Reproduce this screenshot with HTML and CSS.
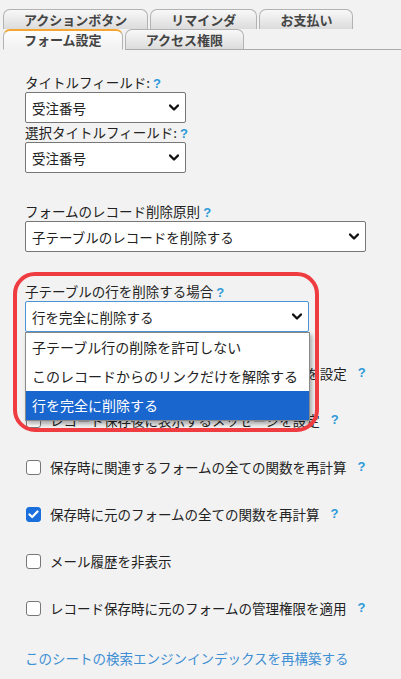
FILE: index.html
```html
<!DOCTYPE html>
<html lang="ja">
<head>
  <meta charset="UTF-8">
  <meta name="viewport" content="width=device-width, initial-scale=1.0">
  <title>フォーム設定</title>
  <link rel="stylesheet" href="styles.css">
</head>
<body>
  <div class="tabs">
    <div class="tab-row">
      <div class="tab">アクションボタン</div>
      <div class="tab">リマインダ</div>
      <div class="tab">お支払い</div>
    </div>
    <div class="tab-row front">
      <div class="tab active">フォーム設定</div>
      <div class="tab">アクセス権限</div>
      <div class="tab-fill"></div>
    </div>
  </div>

  <div class="panel">
    <div class="group">
      <div class="field">
        <div class="label">タイトルフィールド: <span class="help">?</span></div>
        <div class="select short">
          <span>受注番号</span>
          <svg class="chev" width="10" height="7" viewBox="0 0 10 7"><polyline points="1,1.5 5,5.5 9,1.5" /></svg>
        </div>
      </div>
      <div class="field">
        <div class="label">選択タイトルフィールド: <span class="help">?</span></div>
        <div class="select short">
          <span>受注番号</span>
          <svg class="chev" width="10" height="7" viewBox="0 0 10 7"><polyline points="1,1.5 5,5.5 9,1.5" /></svg>
        </div>
      </div>
    </div>

    <div class="group gap-top">
      <div class="label">フォームのレコード削除原則 <span class="help">?</span></div>
      <div class="select wide">
        <span>子テーブルのレコードを削除する</span>
        <svg class="chev" width="10" height="7" viewBox="0 0 10 7"><polyline points="1,1.5 5,5.5 9,1.5" /></svg>
      </div>
    </div>

    <div class="group gap-top marked">
      <div class="label">子テーブルの行を削除する場合 <span class="help">?</span></div>
      <div class="select-wrap">
        <div class="select mid focused">
          <span>行を完全に削除する</span>
          <svg class="chev" width="10" height="7" viewBox="0 0 10 7"><polyline points="1,1.5 5,5.5 9,1.5" /></svg>
        </div>
        <ul class="menu">
          <li>子テーブル行の削除を許可しない</li>
          <li>このレコードからのリンクだけを解除する</li>
          <li class="selected">行を完全に削除する</li>
        </ul>
      </div>
      <div class="highlight"></div>
    </div>

    <div class="checks">
      <div class="check"><span class="box"></span><span>レコード保存前に表示する確認メッセージを設定</span><span class="help">?</span></div>
      <div class="check"><span class="box"></span><span>レコード保存後に表示するメッセージを設定</span><span class="help">?</span></div>
      <div class="check"><span class="box"></span><span>保存時に関連するフォームの全ての関数を再計算</span><span class="help">?</span></div>
      <div class="check"><span class="box on"><svg width="11" height="9" viewBox="0 0 11 9"><polyline points="1.5,4.5 4.2,7 9.5,1.5" /></svg></span><span>保存時に元のフォームの全ての関数を再計算</span><span class="help">?</span></div>
      <div class="check"><span class="box"></span><span>メール履歴を非表示</span></div>
      <div class="check"><span class="box"></span><span>レコード保存時に元のフォームの管理権限を適用</span><span class="help">?</span></div>
    </div>

    <a class="rebuild" href="#">このシートの検索エンジンインデックスを再構築する</a>
  </div>
</body>
</html>
```

FILE: styles.css
```css
body {
  margin: 0;
  background: #f2f2f2;
  font-family: "Noto Sans CJK JP", "Noto Sans", sans-serif;
  font-size: 13.5px;
  color: #222;
}

/* tabs */
.tabs {
  padding: 9px 0 0 3px;
}
.tab-row {
  display: flex;
  gap: 2px;
  height: 20px;
}
.tab-row.front {
  height: 21px;
}
.tab {
  box-sizing: border-box;
  height: 20px;
  padding: 0 20px;
  border: 1px solid #b2b2b2;
  border-bottom: none;
  border-radius: 7px 7px 0 0;
  background: linear-gradient(#f8f8f8, #dcdcdc);
  font-size: 13px;
  font-weight: bold;
  line-height: 19px;
  color: #444;
  white-space: nowrap;
}
.front .tab {
  height: 21px;
  border-bottom: 1px solid #aaa;
}
.front .tab.active {
  border-top: 2px solid #f5a531;
  border-bottom: 1px solid #f2f2f2;
  background: linear-gradient(#fdfdfd, #f2f2f2);
  line-height: 18px;
}
.tab-fill {
  flex: 1;
  border-bottom: 1px solid #aaa;
  margin-left: -2px;
}

/* form panel */
.panel {
  padding: 23px 0 0 25px;
}
.label {
  line-height: 19px;
  height: 19px;
  white-space: nowrap;
}
.help {
  color: #2c9ad9;
  font-weight: bold;
  font-family: "Liberation Sans", sans-serif;
  font-size: 13px;
}
.gap-top {
  margin-top: 29px;
}
.marked {
  position: relative;
  margin-top: 30px;
}
.select {
  box-sizing: border-box;
  height: 31px;
  display: flex;
  align-items: center;
  justify-content: space-between;
  padding: 0 6px;
  background: #fff;
  border: 1px solid #777;
  border-radius: 2px;
  white-space: nowrap;
}
.select.short { width: 161px; }
.select.wide { width: 341px; }
.select.mid { width: 284px; }
.select.focused {
  border-color: #4b95d6;
}
.chev polyline {
  fill: none;
  stroke: #111;
  stroke-width: 2.4;
  stroke-linecap: round;
  stroke-linejoin: round;
}

/* open dropdown */
.select-wrap {
  position: relative;
}
.menu {
  position: absolute;
  top: 31px;
  left: 0;
  z-index: 2;
  width: 285px;
  box-sizing: border-box;
  margin: 0;
  padding: 0;
  list-style: none;
  background: #fff;
  border: 1px solid #8a8a8a;
  box-shadow: 2px 3px 4px rgba(0, 0, 0, 0.3);
  font-size: 14px;
}
.menu li {
  height: 29px;
  line-height: 29px;
  padding-left: 6px;
  white-space: nowrap;
}
.menu li.selected {
  background: #1966cf;
  color: #fff;
}
.highlight {
  position: absolute;
  top: -10px;
  left: -12px;
  z-index: 3;
  width: 306px;
  height: 160px;
  box-sizing: border-box;
  border: 4px solid #ef3c41;
  border-radius: 22px;
  pointer-events: none;
}

/* checkbox rows */
.checks {
  margin-top: 31px;
  display: flex;
  flex-direction: column;
  gap: 27px;
}
.check {
  display: flex;
  align-items: center;
  height: 20px;
  line-height: 20px;
  white-space: nowrap;
}
.check .help {
  margin-left: 11px;
}
.box {
  box-sizing: border-box;
  width: 15px;
  height: 15px;
  margin: 0 9px 0 1px;
  border: 1px solid #777;
  border-radius: 3px;
  background: #fff;
  display: flex;
  align-items: center;
  justify-content: center;
}
.box.on {
  background: #1a6fdc;
  border-color: #1a6fdc;
}
.box.on polyline {
  fill: none;
  stroke: #fff;
  stroke-width: 2.2;
  stroke-linecap: round;
  stroke-linejoin: round;
}

.rebuild {
  display: block;
  margin-top: 30px;
  line-height: 20px;
  color: #3f8fd4;
  text-decoration: none;
}
```
